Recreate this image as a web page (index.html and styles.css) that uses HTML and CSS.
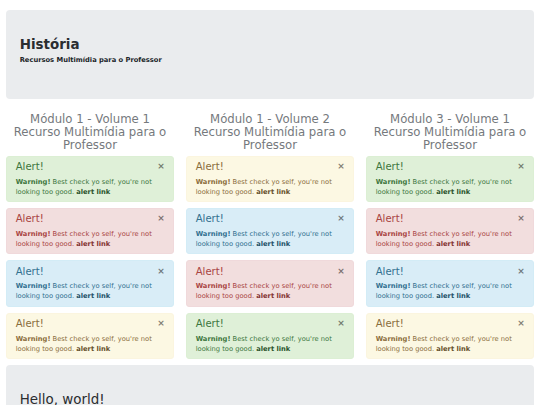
FILE: index.html
```html
<!DOCTYPE html>
<html lang="pt">
<head>
<meta charset="utf-8">
<title>História</title>
<link rel="stylesheet" href="styles.css">
</head>
<body>
<div class="page">
  <header class="jumbotron">
    <h2 class="jumbotron-title">História</h2>
    <h6 class="jumbotron-sub">Recursos Multimídia para o Professor</h6>
  </header>

  <main class="grid">
    <section class="col">
      <h3 class="col-title">Módulo 1 - Volume 1<br>Recurso Multimídia para o Professor</h3>
      <div class="alert alert-success"><span class="close">×</span><h4 class="alert-heading">Alert!</h4><p class="alert-text"><strong>Warning!</strong> Best check yo self, you're not looking too good. <a class="alert-link">alert link</a></p></div>
      <div class="alert alert-danger"><span class="close">×</span><h4 class="alert-heading">Alert!</h4><p class="alert-text"><strong>Warning!</strong> Best check yo self, you're not looking too good. <a class="alert-link">alert link</a></p></div>
      <div class="alert alert-info"><span class="close">×</span><h4 class="alert-heading">Alert!</h4><p class="alert-text"><strong>Warning!</strong> Best check yo self, you're not looking too good. <a class="alert-link">alert link</a></p></div>
      <div class="alert alert-warning"><span class="close">×</span><h4 class="alert-heading">Alert!</h4><p class="alert-text"><strong>Warning!</strong> Best check yo self, you're not looking too good. <a class="alert-link">alert link</a></p></div>
    </section>
    <section class="col">
      <h3 class="col-title">Módulo 1 - Volume 2<br>Recurso Multimídia para o Professor</h3>
      <div class="alert alert-warning"><span class="close">×</span><h4 class="alert-heading">Alert!</h4><p class="alert-text"><strong>Warning!</strong> Best check yo self, you're not looking too good. <a class="alert-link">alert link</a></p></div>
      <div class="alert alert-info"><span class="close">×</span><h4 class="alert-heading">Alert!</h4><p class="alert-text"><strong>Warning!</strong> Best check yo self, you're not looking too good. <a class="alert-link">alert link</a></p></div>
      <div class="alert alert-danger"><span class="close">×</span><h4 class="alert-heading">Alert!</h4><p class="alert-text"><strong>Warning!</strong> Best check yo self, you're not looking too good. <a class="alert-link">alert link</a></p></div>
      <div class="alert alert-success"><span class="close">×</span><h4 class="alert-heading">Alert!</h4><p class="alert-text"><strong>Warning!</strong> Best check yo self, you're not looking too good. <a class="alert-link">alert link</a></p></div>
    </section>
    <section class="col">
      <h3 class="col-title">Módulo 3 - Volume 1<br>Recurso Multimídia para o Professor</h3>
      <div class="alert alert-success"><span class="close">×</span><h4 class="alert-heading">Alert!</h4><p class="alert-text"><strong>Warning!</strong> Best check yo self, you're not looking too good. <a class="alert-link">alert link</a></p></div>
      <div class="alert alert-danger"><span class="close">×</span><h4 class="alert-heading">Alert!</h4><p class="alert-text"><strong>Warning!</strong> Best check yo self, you're not looking too good. <a class="alert-link">alert link</a></p></div>
      <div class="alert alert-info"><span class="close">×</span><h4 class="alert-heading">Alert!</h4><p class="alert-text"><strong>Warning!</strong> Best check yo self, you're not looking too good. <a class="alert-link">alert link</a></p></div>
      <div class="alert alert-warning"><span class="close">×</span><h4 class="alert-heading">Alert!</h4><p class="alert-text"><strong>Warning!</strong> Best check yo self, you're not looking too good. <a class="alert-link">alert link</a></p></div>
    </section>
  </main>

  <section class="jumbotron jumbotron-hello">
    <h1 class="hello-title">Hello, world!</h1>
  </section>
</div>
</body>
</html>
```

FILE: styles.css
```css
* { box-sizing: border-box; }
html, body { margin: 0; padding: 0; }
body {
  font-family: "DejaVu Sans", sans-serif;
  font-size: 6.72px;
  line-height: 1.5;
  color: #212529;
  background: #fff;
}
.page { padding: 10px 6.3px 0; }

.jumbotron {
  background: #eaecee;
  border-radius: 4px;
  padding: 26.6px 13.4px 35px;
  margin-bottom: 13.4px;
}
.jumbotron-title {
  margin: 0 0 3.36px;
  font-size: 13.44px;
  line-height: 1.2;
  font-weight: bold;
  color: #2a2d30;
}
.jumbotron-sub {
  margin: 0;
  font-size: 6.72px;
  line-height: 1.2;
  font-weight: bold;
}
.jumbotron-hello { padding-top: 26.9px; }
.hello-title {
  margin: 0;
  font-size: 13.44px;
  line-height: 1.2;
  font-weight: normal;
  color: #2a2d30;
}

.grid {
  display: grid;
  grid-template-columns: repeat(3, 1fr);
  column-gap: 12.6px;
}
.col-title {
  margin: 0 0 4.3px;
  text-align: center;
  font-size: 11.7px;
  line-height: 13px;
  font-weight: normal;
  color: #75797d;
}

.alert {
  border: 1px solid transparent;
  border-radius: 3px;
  padding: 4.3px 8.4px;
  margin-bottom: 6.2px;
}
.alert-heading {
  margin: 0 0 3.3px;
  font-size: 10.08px;
  line-height: 1.2;
  font-weight: normal;
}
.alert-text { margin: 0; }
.alert-text strong { font-weight: bold; }
.alert-link { font-weight: bold; text-decoration: none; }
.close {
  float: right;
  font-size: 9px;
  line-height: 1;
  font-weight: bold;
  color: #000;
  opacity: .5;
  margin: 1px -0.5px 0 0;
}

.alert-success { background: #dff0d8; border-color: #dcefd4; color: #3c763d; }
.alert-success .alert-link { color: #2b542c; }
.alert-info { background: #d9edf7; border-color: #d3ecf6; color: #31708f; }
.alert-info .alert-link { color: #245269; }
.alert-warning { background: #fcf8e3; border-color: #fbf5df; color: #8a6d3b; }
.alert-warning .alert-link { color: #66512c; }
.alert-danger { background: #f2dede; border-color: #f0d9db; color: #a94442; }
.alert-danger .alert-link { color: #843534; }
```
